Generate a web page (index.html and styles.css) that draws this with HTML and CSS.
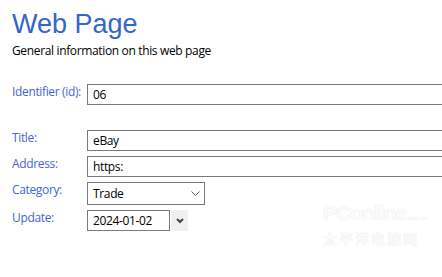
FILE: index.html
```html
<!DOCTYPE html>
<html>
    <head>
        <title>Web Page</title>
        <meta charset="UTF-8">
        <link rel="stylesheet" href="styles.css">
    </head>
    <body>
        <div class="page">
            <h1 class="page-title">Web Page</h1>
            <p class="page-desc">General information on this web page</p>

            <form class="fields">
                <label class="field-label" for="id">Identifier (id):</label>
                <input class="field-input" type="text" id="id" value="06">
            </form>

            <form class="fields fields-main">
                <label class="field-label" for="title">Title:</label>
                <input class="field-input" type="text" id="title" value="eBay">

                <label class="field-label" for="address">Address:</label>
                <input class="field-input" type="text" id="address" value="https:">

                <label class="field-label">Category:</label>
                <div class="select-box">
                    <span>Trade</span>
                    <svg class="select-arrow" width="9" height="5" viewBox="0 0 9 5">
                        <path d="M0.5 0.5 L4.5 4.5 L8.5 0.5" fill="none" stroke="#555" stroke-width="1"/>
                    </svg>
                </div>

                <label class="field-label" for="update">Update:</label>
                <div class="date-field">
                    <input class="date-input" type="text" id="update" value="2024-01-02">
                    <div class="date-button">
                        <svg width="8" height="6" viewBox="0 0 8 6">
                            <path d="M1 1 L4 4 L7 1" fill="none" stroke="#444" stroke-width="2"/>
                        </svg>
                    </div>
                </div>
            </form>
        </div>

        <!-- faint site watermark over the corner -->
        <div class="watermark">
            <div class="wm-logo">PConline<span class="wm-dom">.com.cn</span></div>
            <div class="wm-cn">太平洋电脑网</div>
        </div>
    </body>
</html>
```

FILE: styles.css
```css
body {
    margin: 0;
    background: #fff;
    font-family: "Open Sans", "Noto Sans", sans-serif;
    font-size: 12px;
    letter-spacing: -0.35px;
    overflow: hidden;
}

.page {
    padding: 8px 0 0 12px;
}

.page-title {
    margin: 0;
    font-family: "Liberation Sans", Arial, sans-serif;
    font-weight: normal;
    font-size: 27px;
    line-height: 32px;
    letter-spacing: 0;
    color: #3466c9;
}

.page-desc {
    margin: 3px 0 0 0;
    line-height: 16px;
    color: #000;
}

.fields {
    display: grid;
    grid-template-columns: 75px 400px;
    row-gap: 5px;
    margin-top: 25px;
    align-items: start;
}

.fields-main {
    margin-top: 25px;
}

.field-label {
    color: #3f66d4;
    line-height: 16px;
}

.field-input,
.date-input {
    box-sizing: border-box;
    height: 21px;
    margin: 0;
    padding: 0 5px;
    border: 1px solid #7a7a7a;
    border-radius: 0;
    font-family: "Open Sans", "Noto Sans", sans-serif;
    font-size: 12px;
    letter-spacing: -0.35px;
    color: #000;
    background: #fff;
    outline: none;
}

.field-input {
    width: 400px;
}

.select-box {
    box-sizing: border-box;
    width: 118px;
    height: 23px;
    padding: 0 4px 0 5px;
    border: 1px solid #7a7a7a;
    display: flex;
    align-items: center;
    justify-content: space-between;
    line-height: 16px;
}

.date-field {
    display: flex;
    gap: 1px;
}

.date-input {
    width: 83px;
}

.date-button {
    width: 17px;
    height: 21px;
    background: #f0f0f0;
    display: flex;
    align-items: center;
    justify-content: center;
}

.watermark {
    position: absolute;
    left: 323px;
    top: 201px;
    color: #fbfbfb;
    text-shadow: 0 0 1px #dcdcdc;
    letter-spacing: 0;
}

.wm-logo {
    font-family: "Liberation Sans", Arial, sans-serif;
    font-size: 21px;
    font-weight: bold;
    line-height: 23px;
    letter-spacing: -1px;
}

.wm-dom {
    font-size: 6px;
    letter-spacing: 0;
    font-weight: normal;
}

.wm-cn {
    font-family: "Noto Sans CJK SC", sans-serif;
    font-size: 14px;
    line-height: 16px;
    letter-spacing: 2px;
    font-weight: bold;
}
```
